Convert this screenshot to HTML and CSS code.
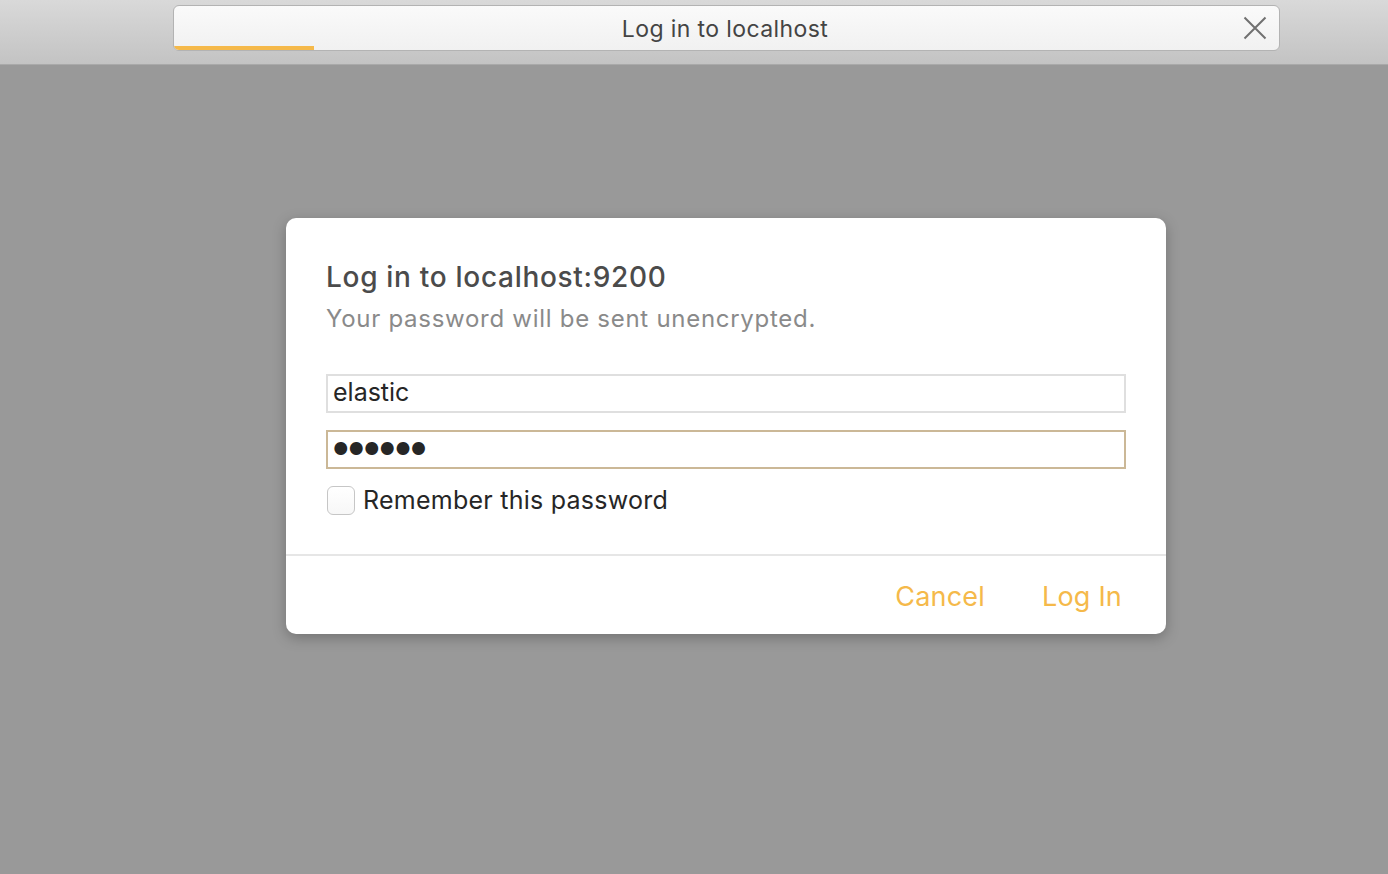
FILE: index.html
```html
<!DOCTYPE html>
<html>
<head>
<meta charset="utf-8">
<link rel="stylesheet" href="styles.css">
</head>
<body>
<div class="toolbar">
  <div class="addressbar">
    <div class="progress"></div>
    <div class="title">Log in to localhost</div>
    <svg class="close" width="24" height="24" viewBox="0 0 24 24"><path d="M1.5 1.5 L22.5 22.5 M22.5 1.5 L1.5 22.5" stroke="#707070" stroke-width="2" fill="none"/></svg>
  </div>
</div>
<div class="stage">
  <div class="dialog">
    <div class="body">
      <h1 class="heading">Log in to localhost:9200</h1>
      <p class="sub">Your password will be sent unencrypted.</p>
      <div class="field user">elastic</div>
      <div class="field pass">●●●●●●</div>
      <label class="remember"><span class="box"></span>Remember this password</label>
    </div>
    <div class="footer">
      <span class="btn">Cancel</span>
      <span class="btn">Log In</span>
    </div>
  </div>
</div>
</body>
</html>
```
FILE: styles.css
```css
* { box-sizing: border-box; }
html, body { margin: 0; padding: 0; }
body {
  width: 1388px;
  height: 874px;
  background: #999999;
  font-family: Inter, "Liberation Sans", Arial, sans-serif;
  overflow: hidden;
}
.toolbar {
  height: 65px;
  background: linear-gradient(#d9d9d9, #c3c3c3);
  border-bottom: 1px solid #a9a9a9;
  padding: 5px 0 0 173px;
}
.addressbar {
  position: relative;
  width: 1107px;
  height: 46px;
  border: 1px solid #b3b3b3;
  border-radius: 6px;
  background: linear-gradient(#fafafa, #f1f1f1);
  display: flex;
  align-items: center;
  justify-content: center;
  overflow: hidden;
}
.progress {
  position: absolute;
  left: 0;
  bottom: 0;
  width: 140px;
  height: 4px;
  background: #f5b94a;
}
.title {
  font-size: 23px;
  color: #444;
  letter-spacing: 0.4px;
  margin-right: 3px;
  margin-top: 2px;
}
.close {
  position: absolute;
  right: 12px;
  top: 10px;
}
.stage {
  padding: 153px 0 0 286px;
}
.dialog {
  width: 880px;
  height: 416px;
  background: #fff;
  border-radius: 10px;
  box-shadow: 0 4px 14px rgba(0,0,0,0.25);
  display: flex;
  flex-direction: column;
}
.body {
  padding: 42px 40px 0 40px;
  height: 338px;
  border-bottom: 2px solid #e6e6e6;
}
.heading {
  margin: 0;
  font-size: 28px;
  font-weight: 500;
  color: #4b4b4b;
  line-height: 34px;
  letter-spacing: 0.7px;
}
.sub {
  margin: 10px 0 0 0;
  font-size: 24px;
  color: #8a8a8a;
  line-height: 30px;
  letter-spacing: 0.72px;
}
.field {
  width: 800px;
  height: 39px;
  border: 2px solid #dfdfdf;
  font-size: 25px;
  color: #262626;
  padding-left: 5px;
  line-height: 33px;
}
.user { margin-top: 40px; }
.pass {
  margin-top: 17px;
  border-color: #cbb897;
  font-size: 17px;
  letter-spacing: 0px;
  line-height: 34px;
  padding-left: 5px;
}
.remember {
  margin-top: 16px;
  display: flex;
  align-items: center;
  font-size: 25px;
  color: #262626;
  letter-spacing: 0.25px;
}
.box {
  width: 28px;
  height: 29px;
  border: 1.5px solid #c6c6c6;
  border-radius: 6px;
  margin-right: 8px;
  margin-left: 1px;
  background: linear-gradient(#ffffff, #f7f7f7);
}
.footer {
  flex: 1;
  display: flex;
  justify-content: flex-end;
  align-items: center;
  gap: 57px;
  padding-right: 44px;
  padding-top: 2px;
}
.btn {
  font-size: 27px;
  color: #f5b94a;
  letter-spacing: 0.2px;
}
```
